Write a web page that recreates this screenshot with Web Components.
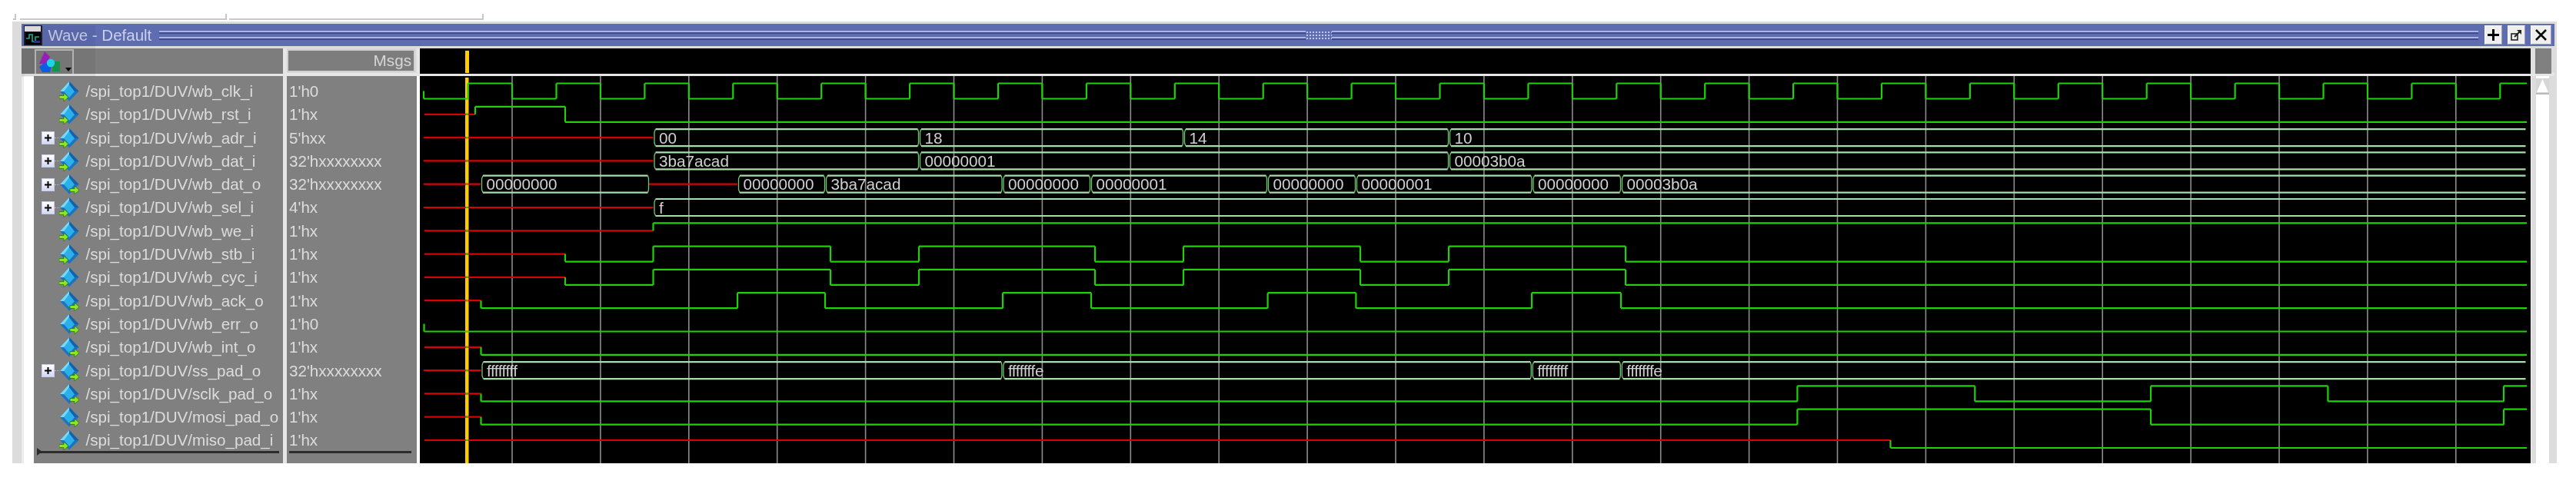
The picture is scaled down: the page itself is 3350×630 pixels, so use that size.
<!DOCTYPE html>
<html>
<head>
<meta charset="utf-8">
<title>Wave - Default</title>
<style>
  html, body { margin: 0; background: #fff; }
  body { padding-top: 18px; width: 3350px; height: 612px; overflow: hidden; font-family: "Liberation Sans", Arial, sans-serif; }
</style>
</head>
<body>
<tab-stubs></tab-stubs>
<wave-window>
  <title-bar slot="title">Wave - Default</title-bar>
  <wave-toolbar slot="tools"></wave-toolbar>
  <msgs-head slot="msgs">Msgs</msgs-head>
  <wave-head slot="wavehead"></wave-head>
  <signal-list slot="list">
    <signal-row dir="in">/spi_top1/DUV/wb_clk_i<span slot="value">1'h0</span></signal-row>
    <signal-row dir="in">/spi_top1/DUV/wb_rst_i<span slot="value">1'hx</span></signal-row>
    <signal-row dir="in" expand>/spi_top1/DUV/wb_adr_i<span slot="value">5'hxx</span></signal-row>
    <signal-row dir="in" expand>/spi_top1/DUV/wb_dat_i<span slot="value">32'hxxxxxxxx</span></signal-row>
    <signal-row dir="out" expand>/spi_top1/DUV/wb_dat_o<span slot="value">32'hxxxxxxxx</span></signal-row>
    <signal-row dir="in" expand>/spi_top1/DUV/wb_sel_i<span slot="value">4'hx</span></signal-row>
    <signal-row dir="in">/spi_top1/DUV/wb_we_i<span slot="value">1'hx</span></signal-row>
    <signal-row dir="in">/spi_top1/DUV/wb_stb_i<span slot="value">1'hx</span></signal-row>
    <signal-row dir="in">/spi_top1/DUV/wb_cyc_i<span slot="value">1'hx</span></signal-row>
    <signal-row dir="out">/spi_top1/DUV/wb_ack_o<span slot="value">1'hx</span></signal-row>
    <signal-row dir="out">/spi_top1/DUV/wb_err_o<span slot="value">1'h0</span></signal-row>
    <signal-row dir="out">/spi_top1/DUV/wb_int_o<span slot="value">1'hx</span></signal-row>
    <signal-row dir="out" expand>/spi_top1/DUV/ss_pad_o<span slot="value">32'hxxxxxxxx</span></signal-row>
    <signal-row dir="out">/spi_top1/DUV/sclk_pad_o<span slot="value">1'hx</span></signal-row>
    <signal-row dir="out">/spi_top1/DUV/mosi_pad_o<span slot="value">1'hx</span></signal-row>
    <signal-row dir="in">/spi_top1/DUV/miso_pad_i<span slot="value">1'hx</span></signal-row>
  </signal-list>
  <wave-canvas slot="canvas"></wave-canvas>
  <wave-scrollbar slot="scroll"></wave-scrollbar>
</wave-window>

<script>
class TabStubs extends HTMLElement {
  constructor() {
    super();
    this.attachShadow({ mode: 'open' }).innerHTML = `
      <style>
        :host { display: flex; height: 10px; padding-left: 17px; }
        div { height: 6px; border-bottom: 2px solid #c8c8c8; border-right: 2px solid #c8c8c8; }
        .a { width: 2px; }
        .b { width: 267px; margin-left: 5px; }
        .c { width: 329px; margin-left: 3px; }
      </style>
      <div class="a"></div><div class="b"></div><div class="c"></div>`;
  }
}
customElements.define('tab-stubs', TabStubs);

class WaveWindow extends HTMLElement {
  constructor() {
    super();
    this.attachShadow({ mode: 'open' }).innerHTML = `
      <style>
        :host { display: block; position: relative; width: 3309px; height: 575px; box-sizing: border-box;
                margin-left: 16px; padding: 3px 3px 0 12px; background: #dcdcdc; filter: blur(.7px); }
        .head { display: grid; grid-template-columns: 340px 5px 169px 4px 2745px 6px 21px; height: 32px; margin-top: 3px; }
        .split { height: 4px; margin-left: 4px; background: #e6e6e6; }
        .body { display: grid; grid-template-columns: 3px 13px 498px 4px 2745px 31px; height: 504px; }
        .stripe { background: #ececec; }
        .white, .gap { background: #fff; }
        .sep { background: #e6e6e6; }
        .gutter { background: #e0e0e0; }
        .head .scrollcap { background: #808080; }
        .shade { position: absolute; left: 12px; top: 5px; width: 96px; height: 67px; background: rgba(0,0,0,.05); pointer-events: none; }
      </style>
      <slot name="title"></slot>
      <div class="head">
        <slot name="tools"></slot><div class="sep"></div><slot name="msgs"></slot><div class="sep"></div>
        <slot name="wavehead"></slot><div class="gutter"></div><div class="scrollcap"></div>
      </div>
      <div class="split"></div>
      <div class="body">
        <div class="stripe"></div><div class="white"></div>
        <slot name="list"></slot><div class="gap"></div>
        <slot name="canvas"></slot><slot name="scroll"></slot>
      </div>
      <div class="shade"></div>`;
  }
}
customElements.define('wave-window', WaveWindow);

class TitleBar extends HTMLElement {
  constructor() {
    super();
    this.attachShadow({ mode: 'open' }).innerHTML = `
      <style>
        :host { display: flex; align-items: center; height: 29px; background: #5e6cb0; color: #ccd2ec;
                font: 20.5px "Liberation Sans", Arial, sans-serif; white-space: nowrap; }
        .ico { width: 24px; height: 26px; margin-left: 3px; flex: none; }
        .txt { margin-left: 7.5px; width: 135px; flex: none; }
        .grip { flex: 1; height: 14px; margin: 0 8px 0 9.5px; display: flex; align-items: center;
                background: linear-gradient(#5e6cb0 1px, #aab3ea 1px 3px, #3f4b8c 3px 5px, #5e6cb0 5px 9px, #aab3ea 9px 11px, #3f4b8c 11px 13px, #5e6cb0 13px); }
        .dots { width: 34px; height: 14px; margin: 0 auto; background-color: #5e6cb0;
                background-image: radial-gradient(#c0c6ee 0 1px, transparent 1.2px); background-size: 4px 4px; background-position: 0 1px; }
        .btn { width: 23px; height: 25px; margin-right: 7px; flex: none; box-sizing: border-box; background: #efefef;
               border: 1px solid; border-color: #fff #9a9ab8 #9a9ab8 #fff; display: flex; align-items: center; justify-content: center; }
        .btn.x { width: 27px; margin-right: 4px; }
      </style>
      <svg class="ico" viewBox="0 0 24 26">
        <rect width="24" height="26" fill="#20202c"/>
        <rect x="1" y="1" width="21" height="7" fill="#e6e6e6"/>
        <rect x="2" y="9" width="20" height="16" fill="#000"/>
        <path d="M3 17H7V12H11V21H15V15H20" fill="none" stroke="#16b8a0" stroke-width="1.6"/>
        <rect x="13" y="20" width="8" height="3" fill="#3030a0"/>
      </svg>
      <span class="txt"><slot></slot></span>
      <div class="grip"><div class="dots"></div></div>
      <div class="btn"><svg width="15" height="15" viewBox="0 0 15 15"><path d="M7.5 0V15M0 7.5H15" stroke="#000" stroke-width="3"/></svg></div>
      <div class="btn"><svg width="15" height="15" viewBox="0 0 15 15"><rect x="1" y="6" width="8" height="8" fill="none" stroke="#222" stroke-width="1.6"/><path d="M5 10L12 3" stroke="#222" stroke-width="2"/><path d="M8 1H14V7Z" fill="#222"/></svg></div>
      <div class="btn x"><svg width="15" height="15" viewBox="0 0 15 15"><path d="M1 1L14 14M14 1L1 14" stroke="#000" stroke-width="2.6"/></svg></div>`;
  }
}
customElements.define('title-bar', TitleBar);

class WaveToolbar extends HTMLElement {
  constructor() {
    super();
    this.attachShadow({ mode: 'open' }).innerHTML = `
      <style>
        :host { display: flex; background: #7d7d7d; }
        .strip { width: 17px; background: #777; }
        .btn { width: 51px; box-sizing: border-box; border: 2px solid #bdbdbd; border-bottom: 0; margin-top: 1px; }
        svg { display: block; }
      </style>
      <div class="strip"></div>
      <div class="btn">
        <svg width="47" height="30" viewBox="0 0 47 30">
          <path d="M11 1L18 8L13 17H4Z" fill="#a020c0"/>
          <rect x="21" y="14" width="10" height="13" fill="#1a9a50"/>
          <path d="M4 21L12 15L20 20L18 28H8Z" fill="#1060f0"/>
          <circle cx="19" cy="16" r="5.2" fill="#20e0f8"/>
          <path d="M38 22H46L42 27Z" fill="#000"/>
        </svg>
      </div>`;
  }
}
customElements.define('wave-toolbar', WaveToolbar);

class MsgsHead extends HTMLElement {
  constructor() {
    super();
    this.attachShadow({ mode: 'open' }).innerHTML = `
      <style>
        :host { display: flex; align-items: center; justify-content: flex-end; box-sizing: border-box; margin: 1px 2px 2px 0;
                padding-right: 3px; border: 2px solid #d0d0d0; background: #7d7d7d; color: #d6d6d6;
                font: 20.7px "Liberation Sans", Arial, sans-serif; }
      </style><slot></slot>`;
  }
}
customElements.define('msgs-head', MsgsHead);

class WaveHead extends HTMLElement {
  constructor() {
    super();
    this.attachShadow({ mode: 'open' }).innerHTML = `
      <style>
        :host { display: block; background: #000; padding: 3px 0 0 59px; }
        div { width: 4.5px; height: 29px; background: #ffcc00; }
      </style><div></div>`;
  }
}
customElements.define('wave-head', WaveHead);

class SignalList extends HTMLElement {
  constructor() {
    super();
    this.attachShadow({ mode: 'open' }).innerHTML = `
      <style>
        :host { display: block; position: relative; box-sizing: border-box; padding-top: 4.85px;
                background: linear-gradient(to right, #808080 324px, #e6e6e6 324px 329px, #808080 329px);
                font: 20.6px "Liberation Sans", Arial, sans-serif; color: #dcdcdc; }
        .mark { display: grid; grid-template-columns: 324px 5px 169px; margin-top: -1.5px; height: 3px; }
        .mark i { display: block; background: #2c2c2c; }
        .mark i:first-child { margin: 0 5.5px 0 4px; }
        .mark i:last-child { margin: 0 7px 0 3px; grid-column: 3; }
        .tri { position: absolute; left: 4px; top: 484px; width: 0; height: 0; border-left: 7px solid #2c2c2c;
               border-top: 5.5px solid transparent; border-bottom: 5.5px solid transparent; }
      </style>
      <slot></slot>
      <div class="mark"><i></i><i></i></div>
      <div class="tri"></div>`;
  }
}
customElements.define('signal-list', SignalList);

class SignalRow extends HTMLElement {
  constructor() {
    super();
    const out = this.getAttribute('dir') === 'out';
    const ax = out ? 14 : 0;
    this.attachShadow({ mode: 'open' }).innerHTML = `
      <style>
        :host { display: grid; grid-template-columns: 324px 5px 169px; height: 30.3px; align-items: center; white-space: nowrap; }
        .name { display: flex; align-items: center; padding-left: 9.5px; }
        .box { width: 17px; height: 17px; box-sizing: border-box; flex: none; visibility: hidden; border: 1px solid #c8ccec;
               background: linear-gradient(#fff, #d4d8f4); display: flex; align-items: center; justify-content: center; }
        .dot { width: 6.5px; height: 0; flex: none; visibility: hidden; border-top: 1px dotted #bbb; }
        :host([expand]) .box, :host([expand]) .dot { visibility: visible; }
        svg { flex: none; display: block; }
        .icon { margin-right: 8.5px; }
        .val { grid-column: 3; padding-left: 3px; }
      </style>
      <div class="name">
        <div class="box"><svg width="11" height="11" viewBox="0 0 11 11"><path d="M5.5 1V10M1 5.5H10" stroke="#000" stroke-width="2"/></svg></div>
        <div class="dot"></div>
        <svg class="icon" width="26" height="26" viewBox="0 0 26 26">
          <path d="M13 0L25.5 13L13 25.5L1 13Z" fill="#1b74bf"/>
          <path d="M13 0L1 13L8 13L13 4Z" fill="#79d8f4"/>
          <path d="M13 4L20 13L13 21L6 13Z" fill="#2cb0ea"/>
          <path d="M13 0L25.5 13L20 13L13 4Z" fill="#1560aa"/>
          <path d="M${ax} 18.5H${ax + 6}V15L${ax + 12} 20.5L${ax + 6} 26V22.5H${ax}Z" fill="#8ce81e" stroke="#1f6a10" stroke-width=".7"/>
        </svg>
        <span><slot></slot></span>
      </div>
      <div class="val"><slot name="value"></slot></div>`;
  }
}
customElements.define('signal-row', SignalRow);

// all x values below are page pixels, the canvas starts at x=546 y=99
const OX = 546, OY = 99, END = 3286;
const mid = r => 118.5 + 30.3 * r - OY;

function bitPaths(r, x0, segs) {
  let red = '', green = '', x = x0 - OX;
  segs.forEach(([s, xe], i) => {
    const y = s === 'x' ? mid(r) : s === '1' ? mid(r) - 10 : mid(r) + 10;
    const e = xe - OX;
    if (s === 'x') red += `M${x} ${y}H${e}`;
    else green += `M${x} ${y}H${e}`;
    const n = segs[i + 1];
    if (n) {
      const ny = n[0] === '1' ? mid(r) - 10 : mid(r) + 10;
      green += `M${e} ${y}V${ny}`;
    }
    x = e;
  });
  return [red, green];
}

function busPaths(r, segs) {
  let red = '', pale = '', side = '', texts = '';
  const t = mid(r) - 11, b = mid(r) + 11;
  let x = 551 - OX;
  segs.forEach(([label, xe, tl]) => {
    const e = xe - OX;
    if (label === null) {
      red += `M${x} ${mid(r)}H${e}`;
    } else {
      pale += `M${x + 3} ${t}H${e - 1.5}M${x + 3} ${b}H${e - 1.5}`;
      side += `M${x + 3} ${t}L${x + 1.5} ${t + 4}V${b - 4}L${x + 3} ${b}`;
      if (xe < END) side += `M${e - 1.5} ${t}L${e - .5} ${t + 4}V${b - 4}L${e - 1.5} ${b}`;
      const fit = tl ? ` textLength="${tl}" lengthAdjust="spacing"` : '';
      texts += `<text x="${x + 7.5}" y="${mid(r) + 7.6}"${fit}>${label}</text>`;
    }
    x = e;
  });
  return [red, pale, side, texts];
}

class WaveCanvas extends HTMLElement {
  constructor() {
    super();
    let grid = '', red = '', green = '', pale = '', side = '', texts = '', dots = '';
    for (let k = 0; k <= 22; k++) {
      const gx = 666 + 114.9 * k - OX;
      grid += `M${gx} 0V504`;
    }
    const addBit = (r, x0, segs) => {
      const [a, b] = bitPaths(r, x0, segs);
      red += a; green += b;
    };
    const addBus = (r, segs) => {
      const [a, b, c, d] = busPaths(r, segs);
      red += a; pale += b; side += c; texts += d;
    };

    const clk = [['0', 608.6]];
    for (let k = 0; k <= 22; k++) {
      clk.push(['1', 666 + 114.9 * k]);
      clk.push(['0', 723.5 + 114.9 * k]);
    }
    clk.push(['1', END]);
    green += `M${551 - OX} ${mid(0)}V${mid(0) + 10}`;
    addBit(0, 551, clk);

    addBit(1, 552, [['x', 618], ['1', 735], ['0', END]]);
    addBus(2, [[null, 849.5], ['00', 1195], ['18', 1539], ['14', 1884], ['10', END]]);
    addBus(3, [[null, 849.5], ['3ba7acad', 1195], ['00000001', 1884], ['00003b0a', END]]);
    addBus(4, [[null, 625], ['00000000', 844], [null, 959], ['00000000', 1073], ['3ba7acad', 1303.5],
               ['00000000', 1418], ['00000001', 1648], ['00000000', 1763], ['00000001', 1992.4],
               ['00000000', 2108], ['00003b0a', END]]);
    addBus(5, [[null, 849.5], ['f', END]]);
    addBit(6, 552, [['x', 849.5], ['1', END]]);
    const stb = [['x', 735], ['0', 849.5], ['1', 1080], ['0', 1195], ['1', 1424], ['0', 1539], ['1', 1769], ['0', 1884], ['1', 2114], ['0', END]];
    addBit(7, 552, stb);
    addBit(8, 552, stb);
    addBit(9, 552, [['x', 625.5], ['0', 959], ['1', 1073], ['0', 1304], ['1', 1419], ['0', 1648.6], ['1', 1763.4], ['0', 1992], ['1', 2108], ['0', END]]);
    green += `M${551.5 - OX} ${mid(10)}V${mid(10) + 10}`;
    addBit(10, 551.5, [['0', END]]);
    addBit(11, 552, [['x', 625.5], ['0', END]]);
    addBus(12, [[null, 625.5], ['ffffffff', 1303.4, 40], ['fffffffe', 1991.7, 46.5], ['ffffffff', 2107.8, 40], ['fffffffe', END, 46.5]]);
    addBit(13, 552, [['x', 625.5], ['0', 2337.4], ['1', 2568.3], ['0', 2797], ['1', 3027.4], ['0', 3256], ['1', END]]);
    addBit(14, 552, [['x', 625.5], ['0', 2337.4], ['1', 2797], ['0', 3256], ['1', END]]);
    addBit(15, 552, [['x', 2458.5], ['0', END]]);

    for (let r = 1; r < 16; r++) {
      const c = r === 10 ? '#e08010' : '#30c010';
      const y = r === 10 ? mid(r) + 10 : mid(r);
      dots += `<rect x="${605.5 - OX}" y="${y - 1}" width="3.5" height="2" fill="${c}"/>`;
    }

    this.attachShadow({ mode: 'open' }).innerHTML = `
      <style>
        :host { display: block; background: #000; }
        svg { display: block; }
        text { font: 20.7px "Liberation Sans", Arial, sans-serif; fill: #d0d0d0; }
      </style>
      <svg width="2745" height="504" viewBox="0 0 2745 504">
        <path d="${grid}" fill="none" stroke="#8c8c8c" stroke-width="1.6"/>
        <rect x="${605 - OX}" y="2" width="4.5" height="502" fill="#ffcc00"/>
        <path d="${red}" fill="none" stroke="#d80000" stroke-width="2.2"/>
        <path d="${green}" fill="none" stroke="#20d008" stroke-width="2.2"/>
        <path d="${pale}" fill="none" stroke="#a8dca8" stroke-width="2.2"/>
        <path d="${side}" fill="none" stroke="#70c870" stroke-width="1.3"/>
        ${dots}
        ${texts}
      </svg>`;
  }
}
customElements.define('wave-canvas', WaveCanvas);

class WaveScrollbar extends HTMLElement {
  constructor() {
    super();
    this.attachShadow({ mode: 'open' }).innerHTML = `
      <style>
        :host { display: grid; grid-template-columns: 7px 17px 7px; }
        .side { background: #dcdcdc; }
        .side.l { border-left: 1px solid #f4f4f4; }
        .track { background: #fff; padding-top: 3px; }
        .arrow { display: block; }
      </style>
      <div class="side l"></div>
      <div class="track">
        <svg class="arrow" width="17" height="21" viewBox="0 0 17 21">
          <rect width="17" height="21" fill="#d6d6d6"/>
          <path d="M8.5 1L16 18H1Z" fill="#fff"/>
          <rect y="19" width="17" height="2" fill="#bbb"/>
        </svg>
      </div>
      <div class="side"></div>`;
  }
}
customElements.define('wave-scrollbar', WaveScrollbar);
</script>
</body>
</html>
